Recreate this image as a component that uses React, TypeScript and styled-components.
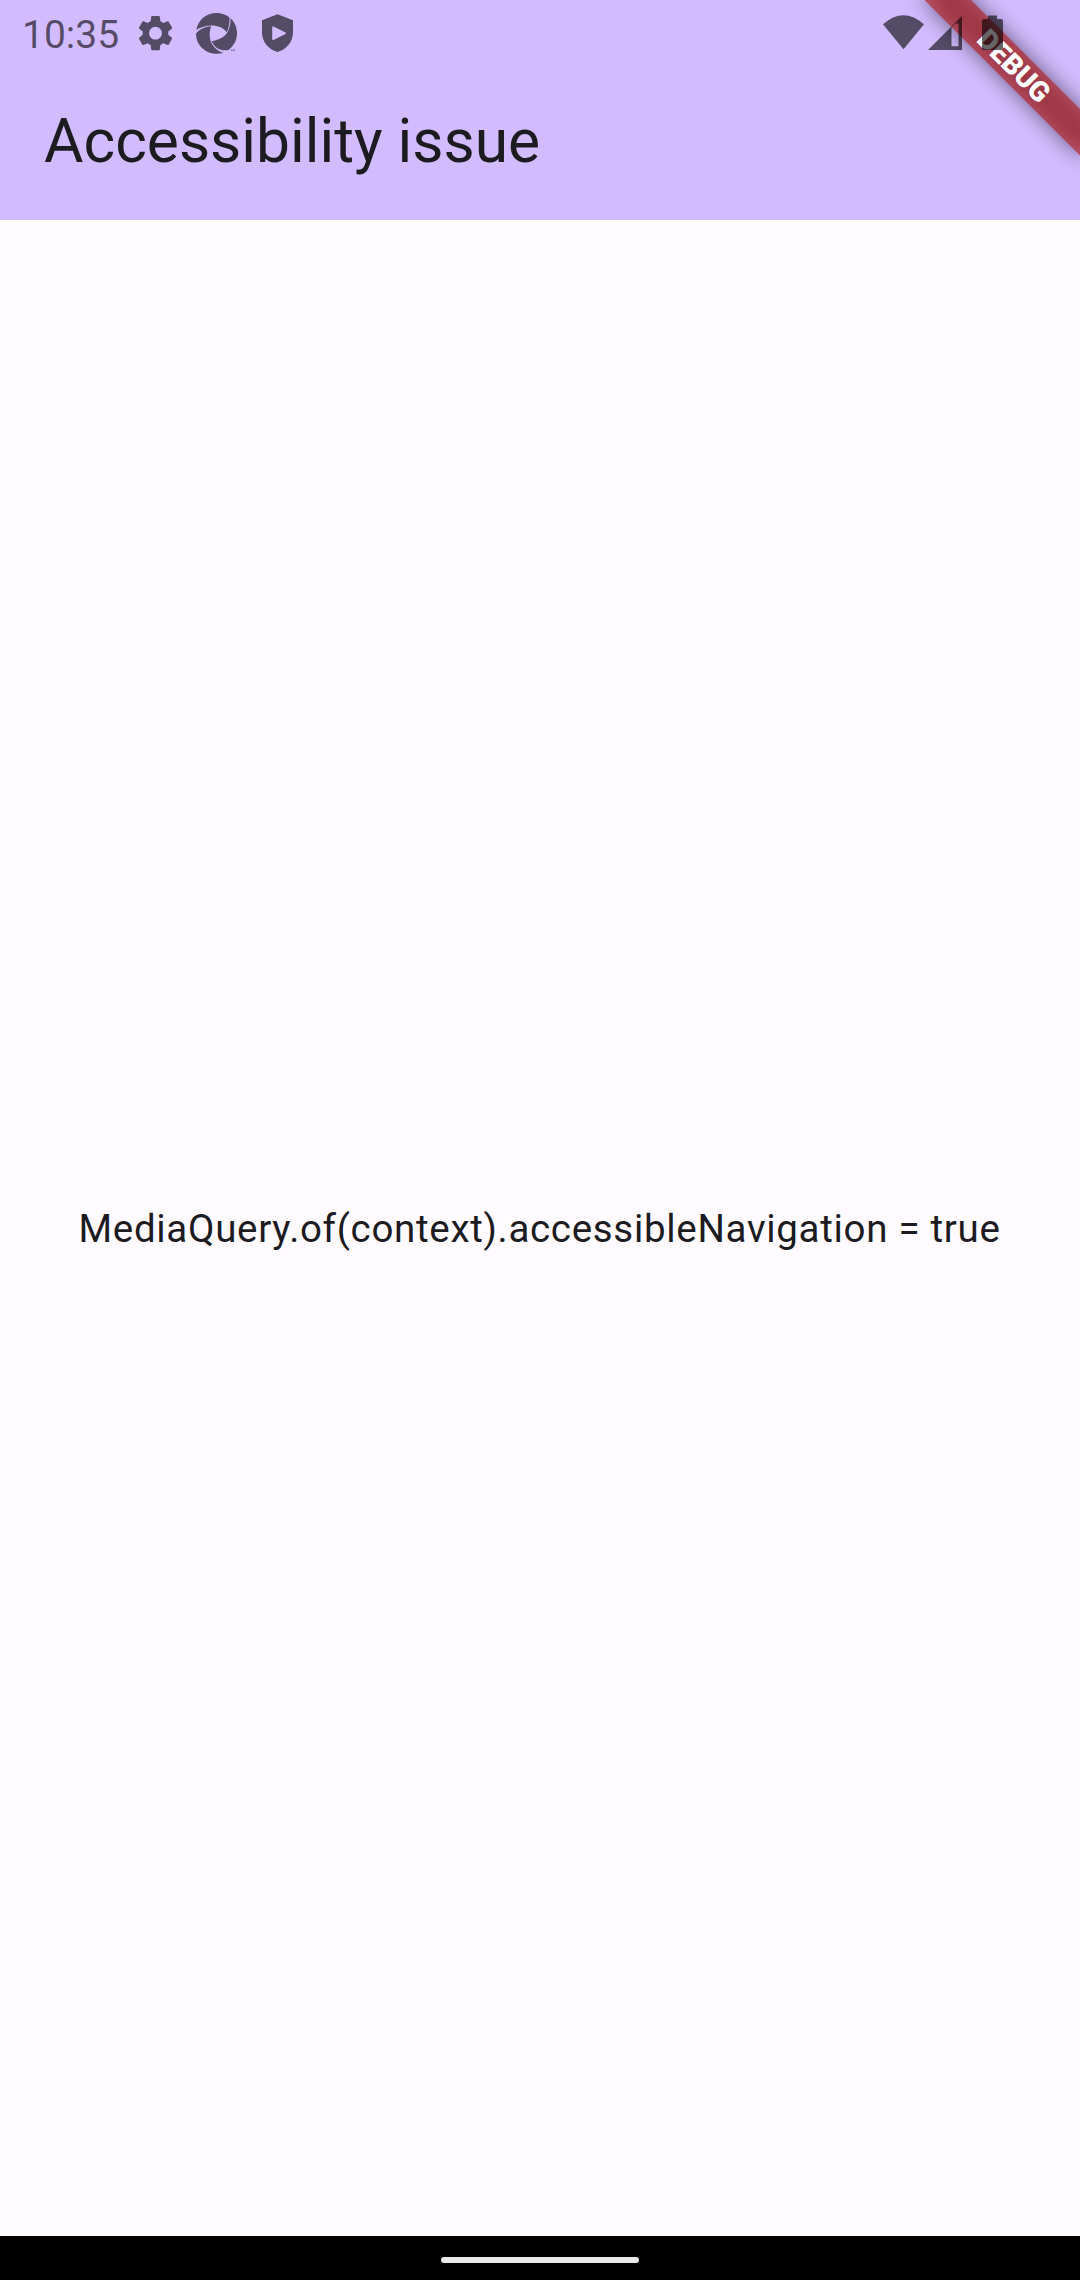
import React from "react";
import styled, { createGlobalStyle } from "styled-components";

const GlobalStyle = createGlobalStyle`
  html, body { margin: 0; padding: 0; }
  body { font-family: Roboto, "Liberation Sans", sans-serif; }
`;

const Screen = styled.div`
  position: relative;
  display: flex;
  flex-direction: column;
  width: 1080px;
  height: 2280px;
  overflow: hidden;
  background: #fffbff;
  color: #1c1b1f;
`;

const Header = styled.header`
  display: flex;
  flex-direction: column;
  height: 220px;
  background: #d2bbff;
`;

const StatusBar = styled.div`
  position: relative;
  z-index: 2;
  display: flex;
  justify-content: space-between;
  height: 66px;
  color: rgba(0, 0, 0, 0.6);
`;

const StatusGroup = styled.div<{ $end?: boolean }>`
  display: flex;
  align-items: center;
  padding: ${(p) => (p.$end ? "0 77px 0 0" : "0 0 0 22px")};
`;

const Clock = styled.span`
  width: 113px;
  font-size: 39px;
  line-height: 66px;
  padding-top: 3px;
`;

const Icon = styled.svg<{ $w: number; $gap?: number }>`
  display: block;
  width: ${(p) => p.$w}px;
  height: 66px;
  margin-right: ${(p) => p.$gap ?? 0}px;
  fill: currentColor;
`;

const AppBar = styled.div`
  display: flex;
  align-items: center;
  height: 150px;
  padding: 0 44px 4px;
`;

const Title = styled.h1`
  margin: 0;
  font-size: 60.5px;
  font-weight: 400;
  line-height: 77px;
`;

const Body = styled.main`
  flex: 1;
  display: flex;
  align-items: center;
  justify-content: center;
  padding-right: 1px;
`;

const Message = styled.p`
  margin: 0;
  font-size: 38.5px;
  line-height: 55px;
  letter-spacing: 0.6875px;
  white-space: nowrap;
`;

const NavBar = styled.footer`
  display: flex;
  align-items: center;
  justify-content: center;
  height: 44px;
  background: #000;
`;

const Handle = styled.div`
  width: 198px;
  height: 6px;
  margin-top: 4px;
  border-radius: 3px;
  background: #e9e9e9;
`;

const BannerLayer = styled.div`
  position: absolute;
  top: 0;
  right: 0;
  z-index: 1;
  width: 0;
  height: 0;
  transform: rotate(45deg);
  transform-origin: 0 0;
`;

const BannerShadow = styled.div`
  position: absolute;
  left: -110px;
  top: 77px;
  width: 220px;
  height: 33px;
  background: rgba(0, 0, 0, 0.5);
  filter: blur(10.9px);
`;

const Banner = styled.div`
  position: absolute;
  left: -110px;
  top: 77px;
  width: 220px;
  height: 33px;
  background: rgba(183, 28, 28, 0.627);
  color: #fff;
  font-size: 28.05px;
  font-weight: 900;
  line-height: 33px;
  text-align: center;
`;

export default function App() {
  return (
    <Screen>
      <GlobalStyle />
      <Header>
        <StatusBar>
          <StatusGroup>
            <Clock>10:35</Clock>
            <Icon $w={41} $gap={20} viewBox="0.5 0.4 23 23">
              <path d="M19.14 12.94c.04-.3.06-.61.06-.94 0-.32-.02-.64-.07-.94l2.03-1.58c.18-.14.23-.41.12-.61l-1.92-3.32c-.12-.22-.37-.29-.59-.22l-2.39.96c-.5-.38-1.03-.7-1.62-.94l-.36-2.54c-.04-.24-.24-.41-.48-.41h-3.84c-.24 0-.43.17-.47.41l-.36 2.54c-.59.24-1.13.57-1.62.94l-2.39-.96c-.22-.08-.47 0-.59.22L2.74 8.87c-.12.21-.08.47.12.61l2.03 1.58c-.05.3-.09.63-.09.94s.02.64.07.94l-2.03 1.58c-.18.14-.23.41-.12.61l1.92 3.32c.12.22.37.29.59.22l2.39-.96c.5.38 1.03.7 1.62.94l.36 2.54c.05.24.24.41.48.41h3.84c.24 0 .44-.17.47-.41l.36-2.54c.59-.24 1.13-.56 1.62-.94l2.39.96c.22.08.47 0 .59-.22l1.92-3.32c.12-.22.07-.47-.12-.61l-2.01-1.58zM12 15.6c-1.98 0-3.6-1.62-3.6-3.6s1.62-3.6 3.6-3.6 3.6 1.62 3.6 3.6-1.62 3.6-3.6 3.6z" />
            </Icon>
            <Icon $w={41} $gap={20} viewBox="0 0 41 66">
              <path d="M.3 30C2 20 10 13 20.500 13c5 0 9.500 1.500 13 4.500.3 5.500-.7 10.500-2.700 14.700C27 27.500 22 25.400 15 25.500 9 25.800 4 27.500.3 30z" />
              <path d="M34.600 18.300C39 22 41 28 41 33.500c0 7-3.500 12.500-8.500 16.500C25 51.500 18.500 48 15.700 41.200 22 40 28 37.500 31 33c2.500-4 3.700-9 3.600-14.700z" />
              <path d="M0 33.500C3.500 29.500 8.500 26.800 15 26.300c-2.200 8-1.500 14.200 2 19.200 2.500 3.600 6 6.300 10.500 7.300C15 57 0 48.500 0 33.500z" />
              <path d="M35 49.500h1.500v1.500H35zM37.200 49.500h1.600v1.500h-1.600z" opacity=".7" />
            </Icon>
            <Icon $w={41} viewBox="0 0 41 66">
              <path fillRule="evenodd" d="M20.500 14.300 36 20.300V32.500C36 41.500 29.700 49.500 20.500 52 11.300 49.500 5 41.500 5 32.500V20.300zM15.200 27.500v11.500q0 1.500 1.300.9l12-6q1.300-.7 0-1.400l-12-6q-1.300-.6-1.300 1z" />
            </Icon>
          </StatusGroup>
          <StatusGroup $end>
            <Icon $w={41} $gap={4} viewBox="0 0 41 66">
              <path d="M0 24.300Q20.500 6.300 41 24.300L20.500 49.300z" />
            </Icon>
            <Icon $w={34} $gap={20} viewBox="0 0 34 66">
              <path fillRule="evenodd" d="M34 16V50H0zM23.500 27.500V46.300H30.500V23.500H27.200z" />
            </Icon>
            <Icon $w={21} viewBox="0 0 21 66">
              <path d="M6 15.500h9V19h4q2 0 2 2v27q0 2-2 2H2q-2 0-2-2V21q0-2 2-2h4z" />
            </Icon>
          </StatusGroup>
        </StatusBar>
        <AppBar>
          <Title>Accessibility issue</Title>
        </AppBar>
      </Header>
      <Body>
        <Message>MediaQuery.of(context).accessibleNavigation = true</Message>
      </Body>
      <NavBar>
        <Handle />
      </NavBar>
      <BannerLayer>
        <BannerShadow />
        <Banner>DEBUG</Banner>
      </BannerLayer>
    </Screen>
  );
}
